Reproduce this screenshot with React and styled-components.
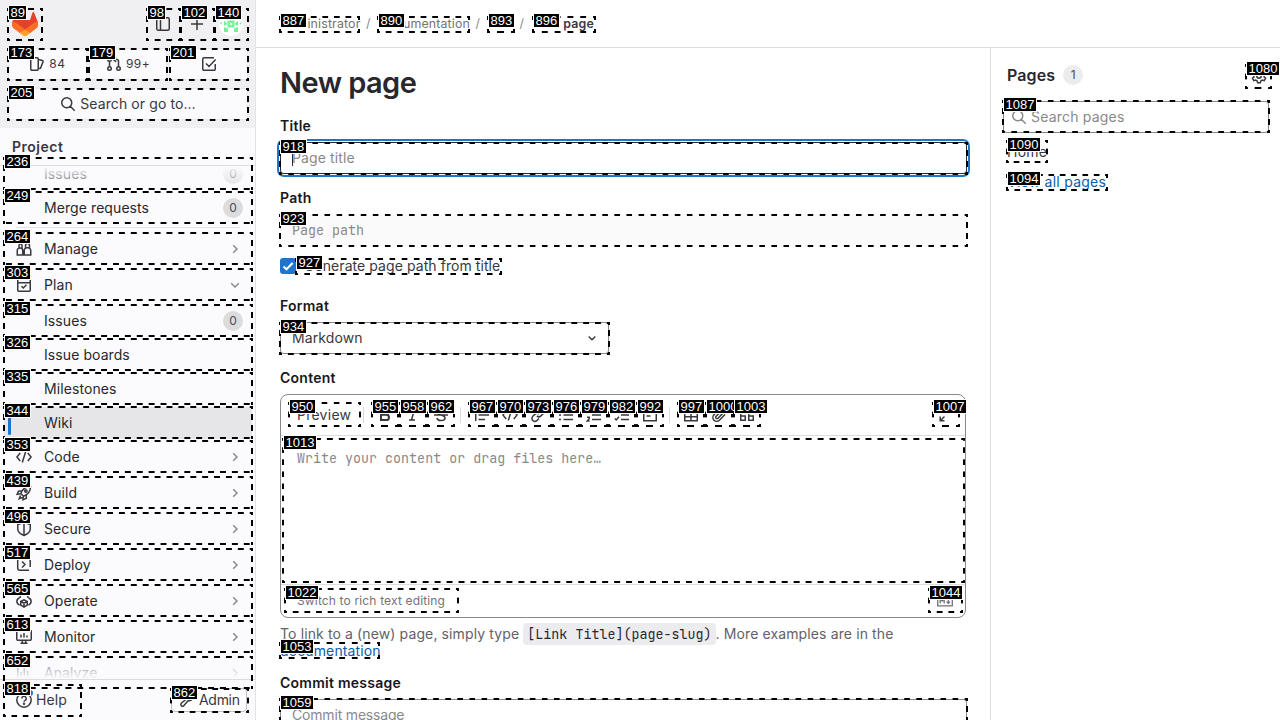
import React from 'react';
import styled, { createGlobalStyle, css } from 'styled-components';

const Global = createGlobalStyle`
  * { box-sizing: border-box; }
  html, body, #root { margin: 0; height: 100%; }
  body {
    font: 14px/16px Inter, "Noto Sans", sans-serif;
    letter-spacing: .11px;
    color: #3a383f;
    background: #fff;
    overflow: hidden;
  }
`;
const mono = '"JetBrains Mono", "DejaVu Sans Mono", monospace';

const Svg = styled.svg`
  display: block;
  flex: none;
  width: ${p => p.$s || 16}px;
  height: ${p => p.$s || 16}px;
  fill: none;
  stroke: currentColor;
  stroke-width: 1.5;
`;

const shapes = {
  sidebar: <><rect x="1.75" y="1.75" width="12.5" height="12.5" rx="1.5" /><path d="M5.5 2v12" /></>,
  plus: <path d="M8 2v12M2 8h12" />,
  issues: <><path d="M9.25 12.5V3a1.25 1.25 0 0 0-1.25-1.25H3A1.25 1.25 0 0 0 1.75 3v10A1.25 1.25 0 0 0 3 14.25h5A1.25 1.25 0 0 0 9.25 13zM9.5 3.5l3.9.9a1 1 0 0 1 .7 1.2L11.5 12.3l-2 .2" /></>,
  merge: <><circle cx="3.5" cy="12.5" r="1.75" /><circle cx="12.5" cy="12.5" r="1.75" /><circle cx="3.5" cy="3.5" r="1.75" /><path d="M3.5 5.3v5.4M12.5 10.7V5a1.5 1.5 0 0 0-1.5-1.5H8M10 1 7.5 3.5 10 6" /></>,
  todo: <path d="M14.25 8v5a1.25 1.25 0 0 1-1.25 1.25H3A1.25 1.25 0 0 1 1.75 13V3A1.25 1.25 0 0 1 3 1.75h10M5 7.5 8 10.5 14.6 3.6" />,
  search: <path d="M11.75 6.75a5 5 0 1 1-10 0 5 5 0 0 1 10 0zM10.3 10.3l4.4 4.4" />,
  manage: <path d="M1.25 14V9.5A2.5 2.5 0 0 1 3.75 7h.5a2.5 2.5 0 0 1 2.5 2.5V14zM8.25 14h6.5V9.5A2.7 2.7 0 0 0 12 6.75h-1A2.7 2.7 0 0 0 8.25 9.5zM3 7V4.5a1.5 1.5 0 0 1 3 0V7M9.500 6.500v-2a2 2 0 0 1 4 0v2" />,
  plan: <path d="M1.75 2.25h12.5v11a1 1 0 0 1-1 1H2.75a1 1 0 0 1-1-1zM2 5.75h12M5.5 9.2 7.3 11 10.5 7.7" />,
  code: <path d="M4.2 4 .9 8l3.3 4M11.8 4l3.3 4-3.3 4M9.7 2.5 6.3 13.5" />,
  rocket: <path d="M4.8 8.5C6.5 4 10 1.4 14.5 1.5c.1 4.5-2.3 8-7 9.7zM6 5.7 2.5 6.2 1.1 9.3l3.4-.6M10.3 10v3.2L7 14.8l.3-3.6M4.5 10.5l-1.3 3.2 3.2-1.2M9 6.7a1.1 1.1 0 1 0 1.8-1.3A1.1 1.1 0 0 0 9 6.7z" />,
  shield: <path d="M1.75 3.5 8 1.5l6.25 2V8c0 3-2.5 5-6.25 6.5C4.25 13 1.75 11 1.75 8zM8 2v12" />,
  deploy: <path d="M5 2.2H2.5a.8.8 0 0 0-.8.8v8a2.3 2.3 0 0 0 2.3 2.3h9M11 2.2h1.8a1.4 1.4 0 0 1 1.4 1.4V10M6 4.5 9 7.5 6 10.5" />,
  operate: <path d="M3.7 12C1.8 11.3.9 10.1.9 8.5c0-1.7 1-3 2.6-3.4M12.3 12c1.9-.7 2.8-1.9 2.8-3.5 0-1.7-1-3-2.6-3.4M4 5a4 4 0 0 1 8 0M4.75 8.5 8 6.8l3.25 1.7v3.7L8 14.2l-3.25-2zM4.8 8.5 8 10.2l3.2-1.7M8 10.2V14" />,
  monitor: <path d="M.75 2v8.2a1 1 0 0 0 1 1h12.5a1 1 0 0 0 1-1V2zM5 5.5v3M8 4v4.5M11 6.5v2M6.3 11.5v2.7M9.7 11.5v2.7M4.5 14.25h7" />,
  chart: <path d="M1.75 1v12.2h13M5 7v4M8.3 3.5V11M11.7 6v5" />,
  help: <><circle cx="8" cy="8" r="7.2" /><path d="M5.8 6.4a2.2 2.2 0 1 1 3.3 1.9c-.8.4-1.1.8-1.1 1.5" /><circle cx="8" cy="11.7" r=".5" /></>,
  admin: <path d="M9.3 8.5 4.7 13.7a1.6 1.6 0 0 1-2.4-2.4L7.6 6.8A3.8 3.8 0 0 1 12.3 2L10 4.3 11.7 6 14 3.8a3.8 3.8 0 0 1-4.7 4.7z" />,
  right: <path d="M6.2 4.2 10 8 6.2 11.8" />,
  down: <path d="M4.2 6.2 8 10 11.8 6.2" />,
  check: <path strokeWidth="2" d="M3.5 8.5 6.5 11.3 12.6 5" />,
  bold: <path strokeWidth="2" d="M4 2.5h4.8a2.6 2.6 0 0 1 0 5.3H4zM4 7.8h5.4a2.6 2.6 0 0 1 0 5.2H4z" />,
  italic: <path d="M6 2.5h6M4 13h6M9.5 2.5l-3 10.5" />,
  strike: <path d="M12 4.5C11.5 3 10 2.2 8 2.2 5.7 2.2 4.2 3.3 4.2 5c0 3.8 7.8 2.2 7.8 6 0 1.5-1.6 2.5-4 2.5-2.2 0-3.8-1-4.1-2.5M1 8h14" />,
  quote: <path d="M1.75 2v12M4.5 3.5H15M4.5 8H15M4.5 12.5H11" />,
  link: <path d="m7 4.5 2-2a2.9 2.9 0 0 1 4.2 4.2l-2.3 2.2a2.9 2.9 0 0 1-4 0M9 11.5l-2 2a2.9 2.9 0 0 1-4.2-4.2l2.3-2.2a2.9 2.9 0 0 1 4 0" />,
  bullets: <path d="M1 3.5h2M1 8h2M1 12.5h2M5.5 3.5H15M5.5 8H15M5.5 12.5H15" />,
  numbers: <path d="M6 3.5h9M6 8h9M6 12.5h9M1.2 2.5h1.3V7M1 10.2h2.2v1.6L1.2 14h2.4" />,
  tasks: <path d="M7 3.5h8M7 8h8M7 12.5h8M.8 4 2.3 5.5 5 2M.8 11.5 2.3 13 5 9.7" />,
  block: <path d="M1.75 2.25h12.5v11.5H1.75zM4.5 6h7M4.5 9h4" />,
  table: <path d="M1.75 2.25h12.5v11.5H1.75zM2 6h12M2 9.7h12M8 6v7.5" />,
  clip: <path d="m14 7.5-5.6 5.7a3.8 3.8 0 0 1-5.4-5.4l5.5-5.6a2.6 2.6 0 0 1 3.7 3.7L7 11.2a1.3 1.3 0 0 1-1.9-1.9L10 4.5" />,
  quotes: <path d="M1.75 9h4.5v4.25h-4.5zV6.5c0-2 1-3.2 3-3.7M9.75 9h4.5v4.25h-4.5zV6.5c0-2 1-3.2 3-3.7" />,
  expand: <path d="M9.5 2.2h4.3v4.3M13.5 2.5 9.5 6.5M6.5 13.8H2.2V9.5M2.5 13.5l4-4" />,
  markdown: <path strokeWidth="1.3" d="M.7 3.2h14.6v9.6H.7zM3.2 10.5V6l2 2 2-2v4.5M11.3 5.7v4.5M9.5 8.6l1.8 1.8 1.8-1.8" />,
  gear: <><circle cx="8" cy="8" r="2.2" /><path d="M6.6 1.2h2.8l.4 1.9 1.5.9 1.9-.6 1.4 2.4L13.1 7v2l1.5 1.2-1.4 2.4-1.9-.6-1.5.9-.4 1.9H6.6l-.4-1.9-1.5-.9-1.9.6-1.4-2.4L2.9 9V7L1.4 5.8l1.4-2.4 1.9.6 1.5-.9z" /></>,
};
const Icon = ({ name, s, ...rest }) => <Svg viewBox="0 0 16 16" $s={s} {...rest}>{shapes[name]}</Svg>;

const Page = styled.div`display: flex; height: 720px; width: 1280px; overflow: hidden;`;

/* Sidebar */
const Sidebar = styled.aside`
  width: 256px; flex: none; display: flex; flex-direction: column;
  background: #fbfafd; border-right: 1px solid #e3e3e6;
`;
const SideTop = styled.div`
  height: 128px; padding: 8px 7px 8px 8px; background: #f0f0f2;
  display: flex; flex-direction: column; gap: 8px;
`;
const TopRow = styled.div`display: flex; align-items: center; height: 32px;`;
const Logo = styled.svg`width: 26px; height: 24px; margin: 0 auto 0 4px; display: block;`;
const IconButton = styled.span`width: 34px; height: 32px; display: flex; align-items: center; justify-content: center;`;
const Avatar = styled.svg`width: 24px; height: 24px; border-radius: 50%; background: #fff;`;
const Counters = styled.div`display: grid; grid-template-columns: repeat(3, 1fr); gap: 2px;`;
const Tile = styled.div`
  height: 32px; border-radius: 4px; background: #fbfafd; box-shadow: inset 0 0 0 1px #e9e9ec;
  display: flex; align-items: center; justify-content: center; gap: 4px;
  font-size: ${p => p.$size || 12}px; letter-spacing: ${p => p.$track || 0.11}px;
`;
const Heading = styled.div`
  height: 38px; padding: 11px 12px 0; font-weight: 600; letter-spacing: .5px;
  border-bottom: 1px solid #dcdcde;
`;
const Nav = styled.nav`
  flex: 1; min-height: 0; overflow: hidden; position: relative; padding: 0 3px 0 4px;
  &::before, &::after { content: ""; position: absolute; left: 0; right: 0; z-index: 1; }
  &::before { top: 0; height: 26px; background: linear-gradient(#fbfafd, #fbfafd00); }
  &::after { bottom: 0; height: 32px; background: linear-gradient(#fbfafd00, #fbfafd); }
`;
const NavList = styled.div`margin-top: -8px;`;
const NavRow = styled.div`
  display: flex; align-items: center; height: 32px; padding: 0 9px 0 12px; gap: 12px;
  margin-bottom: ${p => (p.$sub ? 2 : 4)}px; border-radius: 4px; color: #28272d;
  ${p => p.$active && css`background: #e6e6e9;`}
`;
const Slot = styled.span`width: 16px; height: 24px; display: flex; align-items: center; color: #3a383f;`;
const ActiveBar = styled.span`width: 3px; height: 24px; border-radius: 3px; background: #1f75cb; margin-left: -8px;`;
const NavText = styled.span`flex: 1; letter-spacing: .08px;`;
const Count = styled.span`
  width: 20px; height: 20px; border-radius: 10px; background: ${p => p.$bg || '#dcdcde'};
  display: flex; align-items: center; justify-content: center; font-size: 12px; color: #4c4b51;
  margin-top: -1px;
`;
const Chevron = styled(Icon)`color: #89888d;`;
const Rule = styled.div`height: 1px; background: #e3e3e6; margin: 3px 12px 5px;`;
const SideFoot = styled.div`
  height: 41px; border-top: 1px solid #dcdcde; padding: 0 8px 0 16px; flex: none;
  display: flex; align-items: center; justify-content: space-between;
`;
const FootItem = styled.span`
  display: flex; align-items: center; gap: 4px; height: 24px; position: relative;
  ${p => p.$boxed && css`
    width: 76px; border: 1px solid #bfbfc3; border-radius: 4px; background: #fff; padding-left: 7px; letter-spacing: -.3px;
  `}
`;
const Dot = styled.i`position: absolute; left: 11px; top: 2px; width: 6px; height: 6px; border-radius: 50%; background: #1f75cb;`;

/* Main */
const Body = styled.div`flex: 1; display: flex; flex-direction: column; min-width: 0;`;
const Crumbs = styled.div`
  height: 48px; border-bottom: 1px solid #dcdcde; padding-left: 24px; flex: none;
  display: flex; align-items: center; font-size: 12.4px; color: #737278; letter-spacing: .15px;
  b { color: #3a383f; font-weight: 600; }
`;
const Slash = styled.span`width: 18.5px; padding-right: 3px; text-align: center; color: #89888d;`;
const Columns = styled.div`flex: 1; display: flex; min-height: 0;`;
const Main = styled.main`width: 734px; flex: none; padding: 16px 23px 0 24px; overflow: hidden;`;
const H1 = styled.h1`margin: 0 0 18px; font-size: 29px; line-height: 37px; height: 36px; font-weight: 600; color: #28272d; letter-spacing: -.55px;`;
const Label = styled.div`height: 16px; margin-bottom: 8px; font-weight: 600; color: #18171d; letter-spacing: .25px;`;
const Field = styled.div`
  height: 32px; margin-bottom: ${p => p.$mb ?? 16}px; width: ${p => p.$w || '100%'}; padding: 0 ${p => p.$pr ?? 12}px 0 12px;
  border-radius: 4px; background: #fff; box-shadow: inset 0 0 0 1px #89888d;
  display: flex; align-items: center; color: ${p => (p.$value ? '#3a383f' : '#89888d')};
  letter-spacing: ${p => p.$track ?? 0.11}px;
  ${p => p.$focus && css`box-shadow: inset 0 0 0 1px #28272d, 0 0 0 1px #fff, 0 0 0 3px #1f75cb;`}
  ${p => p.$disabled && css`background: #fafafa; box-shadow: none; font: 13.3px/16px ${mono}; letter-spacing: .03px;`}
`;
const Caret = styled.i`width: 1px; height: 16px; background: #28272d; margin-right: -1px;`;
const Spread = styled.span`flex: 1;`;
const CheckRow = styled.div`display: flex; gap: 8px; height: 16px; margin-bottom: 24px; letter-spacing: .07px;`;
const Check = styled.span`
  width: 16px; height: 16px; border-radius: 3px; background: #1f75cb; color: #fff;
`;
const Editor = styled.div`
  width: 686px; height: 224px; border: 1px solid #89888d; border-radius: 8px; overflow: hidden;
  display: flex; flex-direction: column; margin-bottom: 7px;
`;
const Toolbar = styled.div`
  height: 41px; border-bottom: 1px solid #dcdcde; display: flex; align-items: center; padding: 0 5px 0 8px; flex: none;
`;
const Preview = styled.span`width: 71px; padding-left: 8px; letter-spacing: .25px;`;
const Tool = styled.span`width: 28px; display: flex; justify-content: center;`;
const Divider = styled.i`width: 1px; height: 16px; background: #dcdcde; margin: 0 ${p => p.$r}px 0 ${p => p.$l}px;`;
const Area = styled.div`flex: 1; padding: 13px 16px; font: 13.3px/18px ${mono}; letter-spacing: .03px; color: #89888d;`;
const EditorFoot = styled.div`
  height: 33px; border-top: 1px solid #dcdcde; padding: 0 12px 0 16px; font-size: 12px; letter-spacing: .15px;
  display: flex; align-items: center; justify-content: space-between; color: #737278;
`;
const Hint = styled.p`margin: 0 0 17px; line-height: 17px; color: #626168; height: 33px; letter-spacing: .12px;`;
const Code = styled.code`
  font: 13.3px/16px ${mono}; background: #ececef; border-radius: 4px; padding: 2px 4px; color: #28272d; letter-spacing: .03px;
`;
const Link = styled.a`color: #0b5cad;`;

/* Right panel */
const Panel = styled.aside`flex: 1; border-left: 1px solid #dcdcde; padding: 17px 12px 0;`;
const PanelHead = styled.div`
  display: flex; align-items: center; gap: 8px; height: 21px; padding: 0 2px 0 4px; margin-bottom: 15px;
  b { font-size: 16px; font-weight: 600; color: #28272d; margin-top: -1px; }
`;
const PanelLine = styled.div`padding-left: 4px; margin-top: ${p => p.$top}px; letter-spacing: .25px;`;
const PanelField = styled(Field)`width: 266px; padding: 0 8px; gap: 4px; margin: 0;`;

/* Numbered frames over the interactive elements */
const Overlay = styled.div`position: absolute; left: 0; top: 0; width: 1280px; height: 720px; overflow: hidden; pointer-events: none; z-index: 5;`;
const endDashes = '#000 25%, transparent 25% 75%, #000 75%';
const midDash = 'transparent 25%, #000 25% 75%, transparent 75%';
const Frame = styled.div`
  position: absolute;
  background-image:
    linear-gradient(90deg, ${endDashes}),
    linear-gradient(90deg, ${p => (p.$stagger ? midDash : endDashes)}),
    linear-gradient(${endDashes}),
    linear-gradient(${endDashes});
  background-size: 12px 2px, 12px 2px, 2px 12px, 2px 12px;
  background-position: left top, left bottom, left top, right top;
  background-repeat: round no-repeat, round no-repeat, no-repeat round, no-repeat round;
`;
const Tag = styled.span`
  position: absolute; left: 2px; top: -2px; height: 13px; padding: 0 1.5px; background: #000; color: #fff;
  box-shadow: 0 0 0 1px #fff; font: 13px/13px "Liberation Sans", Arial, sans-serif; letter-spacing: 0;
`;
const tool = (id, x) => [id, x, 402, 28, 25];
const frames = [
  [89, 7, 8, 36, 33], [98, 146, 8, 35, 33], [102, 180, 8, 35, 33], [140, 214, 8, 35, 33],
  [173, 7, 48, 81, 33], [179, 88, 48, 80, 33], [201, 169, 48, 80, 33], [205, 7, 88, 242, 33],
  ...[[236, 157], [249, 191], [264, 232], [303, 268], [315, 304], [326, 338], [335, 372], [344, 406], [353, 440],
    [439, 476], [496, 512], [517, 548], [565, 584], [613, 620], [652, 656]].map(([id, y]) => [id, 3, y, 250, 33]),
  [818, 3, 684, 79, 33], [862, 170, 688, 79, 25],
  [887, 279, 16, 81, 17], [890, 377, 16, 93, 17], [893, 487, 16, 28, 17], [896, 532, 16, 64, 17],
  [918, 279, 142, 689, 33], [923, 279, 214, 689, 33], [927, 295, 258, 207, 17], [934, 279, 322, 331, 33],
  [950, 288, 402, 73, 25],
  tool(955, 371), tool(958, 399), tool(962, 427), tool(967, 468), tool(970, 496), tool(973, 524), tool(976, 552),
  tool(979, 580), tool(982, 608), tool(992, 636), tool(997, 677), tool(1000, 705), tool(1003, 733), tool(1007, 932),
  [1013, 282, 438, 683, 145], [1022, 284, 588, 175, 25], [1044, 928, 588, 35, 25], [1053, 279, 642, 101, 17],
  [1059, 279, 698, 689, 33], [1080, 1245, 64, 27, 25], [1087, 1002, 100, 268, 33], [1090, 1006, 140, 42, 23],
  [1094, 1006, 174, 102, 17],
];

const nav = [
  { t: 'Issues', sub: 1, n: 0 }, { t: 'Merge requests', sub: 1, n: 0 }, { rule: 1 },
  { t: 'Manage', i: 'manage' }, { t: 'Plan', i: 'plan', open: 1 },
  { t: 'Issues', sub: 1, n: 0 }, { t: 'Issue boards', sub: 1 }, { t: 'Milestones', sub: 1 }, { t: 'Wiki', sub: 1, active: 1 },
  { t: 'Code', i: 'code' }, { t: 'Build', i: 'rocket' }, { t: 'Secure', i: 'shield' }, { t: 'Deploy', i: 'deploy' },
  { t: 'Operate', i: 'operate' }, { t: 'Monitor', i: 'monitor' }, { t: 'Analyze', i: 'chart' },
];

const NavItem = ({ item }) => item.rule ? <Rule /> : (
  <NavRow $sub={item.sub} $active={item.active}>
    <Slot>{item.i && <Icon name={item.i} />}{item.active && <ActiveBar />}</Slot>
    <NavText>{item.t}</NavText>
    {item.n !== undefined && <Count>{item.n}</Count>}
    {!item.sub && <Chevron name={item.open ? 'down' : 'right'} />}
  </NavRow>
);
const Tools = ({ names }) => names.map(n => <Tool key={n}><Icon name={n} /></Tool>);

export default function App() {
  return (
    <>
      <Global />
      <Page>
        <Sidebar>
          <SideTop>
            <TopRow>
              <Logo viewBox="0 0 26 24">
                <path fill="#e24329" d="M25.6 9.5 22.1.6a1 1 0 0 0-1.7.1L18 8H8L5.6.7A1 1 0 0 0 3.9.6L.4 9.5a6.5 6.5 0 0 0 2.2 7.5L13 20l10.4-3a6.5 6.5 0 0 0 2.2-7.5z" />
                <path fill="#fc6d26" d="M25.6 9.5a12 12 0 0 0-4.7 2.1L13 17.5l5 3.7 5.4-4.2a6.5 6.5 0 0 0 2.2-7.5zM.4 9.5a12 12 0 0 1 4.7 2.1l7.9 5.9-5 3.7L2.6 17A6.5 6.5 0 0 1 .4 9.5z" />
                <path fill="#fca326" d="m8 21.2 4 3a1.6 1.6 0 0 0 2 0l4-3-5-3.7z" />
              </Logo>
              <IconButton><Icon name="sidebar" /></IconButton>
              <IconButton><Icon name="plus" /></IconButton>
              <IconButton>
                <Avatar viewBox="0 0 24 24">
                  <path fill="#78f09a" d="M8.5 8.5h7v7h-7zM5 5h3.5v3.5zM19 5h-3.5v3.5zM5 20v-5l4 1.5V20zM19 20v-5l-4 1.5V20zM5 8.5 8.5 12 5 14zM19 8.5 15.5 12 19 14zM1 10.5h2.500L2 13zM23 10.5h-2.500L22 13z" />
                  <path fill="#fff" d="m12 10.5 1.5 1.5-1.5 1.5-1.5-1.5z" />
                </Avatar>
              </IconButton>
            </TopRow>
            <Counters>
              <Tile $track={.4}><Icon name="issues" />84</Tile>
              <Tile $track={.4}><Icon name="merge" />99+</Tile>
              <Tile><Icon name="todo" /></Tile>
            </Counters>
            <Tile $size={14}><Icon name="search" />Search or go to…</Tile>
          </SideTop>
          <Heading>Project</Heading>
          <Nav><NavList>{nav.map((item, i) => <NavItem key={i} item={item} />)}</NavList></Nav>
          <SideFoot>
            <FootItem><Icon name="help" /><Dot />Help</FootItem>
            <FootItem $boxed><Icon name="admin" />Admin</FootItem>
          </SideFoot>
        </Sidebar>
        <Body>
          <Crumbs>
            <span>Administrator</span><Slash>/</Slash><span>Documentation</span><Slash>/</Slash>
            <span>Wiki</span><Slash>/</Slash><b>New page</b>
          </Crumbs>
          <Columns>
            <Main>
              <H1>New page</H1>
              <Label>Title</Label>
              <Field $focus><Caret />Page title</Field>
              <Label>Path</Label>
              <Field $disabled $mb={12}>Page path</Field>
              <CheckRow><Check><Icon name="check" /></Check>Generate page path from title</CheckRow>
              <Label>Format</Label>
              <Field $value $w="329px" $pr={10}><Spread>Markdown</Spread><Icon name="down" s={14} /></Field>
              <Label>Content</Label>
              <Editor>
                <Toolbar>
                  <Preview>Preview</Preview>
                  <Divider $l={3} $r={7} />
                  <Tools names={['bold', 'italic', 'strike']} />
                  <Divider $l={5} $r={7} />
                  <Tools names={['quote', 'code', 'link', 'bullets', 'numbers', 'tasks', 'block']} />
                  <Divider $l={5} $r={7} />
                  <Tools names={['table', 'clip', 'quotes']} />
                  <Spread />
                  <Tools names={['expand']} />
                </Toolbar>
                <Area>Write your content or drag files here…</Area>
                <EditorFoot>Switch to rich text editing<Icon name="markdown" /></EditorFoot>
              </Editor>
              <Hint>To link to a (new) page, simply type <Code>[Link Title](page-slug)</Code>. More examples are in the <Link>documentation</Link></Hint>
              <Label>Commit message</Label>
              <Field $track={-.18}>Commit message</Field>
            </Main>
            <Panel>
              <PanelHead><b>Pages</b><Count $bg="#ececef">1</Count><Spread /><Icon name="gear" /></PanelHead>
              <PanelField $track={.2}><Icon name="search" />Search pages</PanelField>
              <PanelLine $top={11}>Home</PanelLine>
              <PanelLine $top={14}><Link>View all pages</Link></PanelLine>
            </Panel>
          </Columns>
        </Body>
      </Page>
      <Overlay>
        {frames.map(([id, x, y, w, h]) => (
          <Frame key={id} $stagger={w === 250} style={{ left: x, top: y, width: w, height: h }}><Tag>{id}</Tag></Frame>
        ))}
      </Overlay>
    </>
  );
}
